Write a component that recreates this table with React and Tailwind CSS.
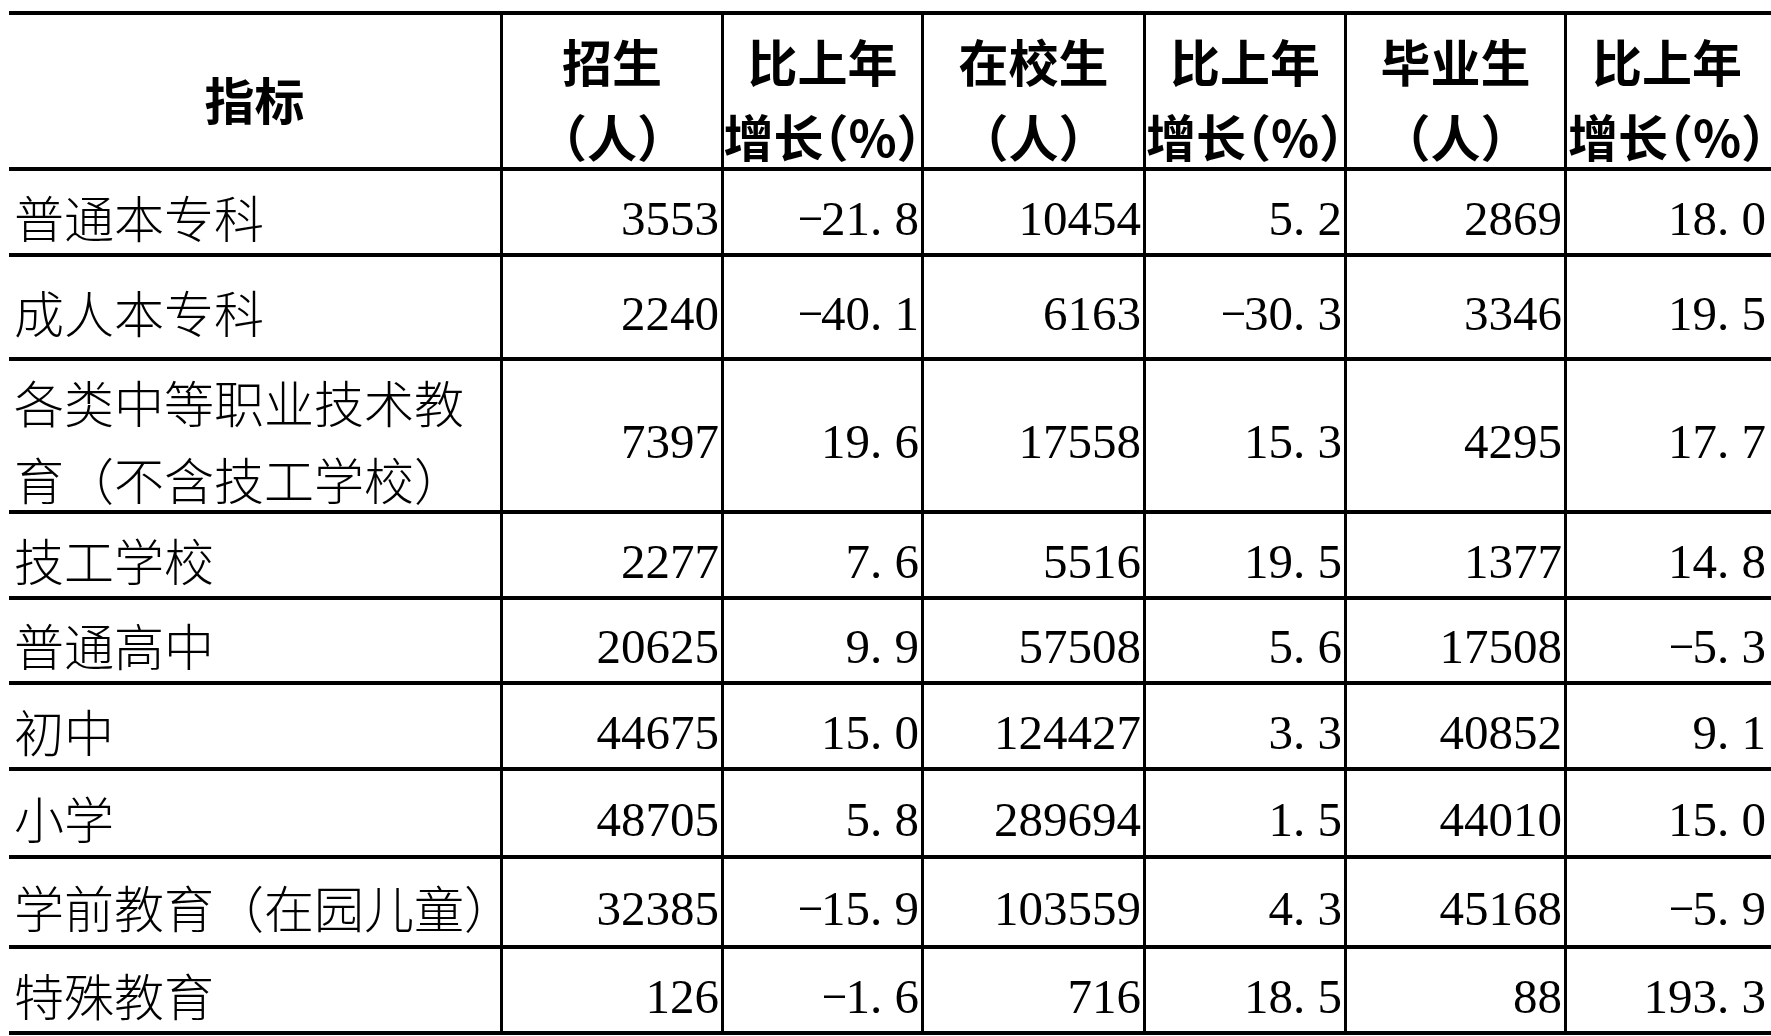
import React from 'react';

const header = [
  ['招生', '（人）'],
  ['比上年', '增长（%）'],
  ['在校生', '（人）'],
  ['比上年', '增长（%）'],
  ['毕业生', '（人）'],
  ['比上年', '增长（%）'],
];

const rows = [
  { name: ['普通本专科'], v: ['3553', '-21.8', '10454', '5.2', '2869', '18.0'] },
  { name: ['成人本专科'], v: ['2240', '-40.1', '6163', '-30.3', '3346', '19.5'] },
  { name: ['各类中等职业技术教', '育（不含技工学校）'], v: ['7397', '19.6', '17558', '15.3', '4295', '17.7'] },
  { name: ['技工学校'], v: ['2277', '7.6', '5516', '19.5', '1377', '14.8'] },
  { name: ['普通高中'], v: ['20625', '9.9', '57508', '5.6', '17508', '-5.3'] },
  { name: ['初中'], v: ['44675', '15.0', '124427', '3.3', '40852', '9.1'] },
  { name: ['小学'], v: ['48705', '5.8', '289694', '1.5', '44010', '15.0'] },
  { name: ['学前教育（在园儿童）'], v: ['32385', '-15.9', '103559', '4.3', '45168', '-5.9'] },
  { name: ['特殊教育'], v: ['126', '-1.6', '716', '18.5', '88', '193.3'] },
];

// half-width cells like the Song face: period sits left, dash runs most of the cell
const Num = ({ v }) => (
  <span className="whitespace-nowrap">
    {[...v].map((c, i) => {
      if (c === '.') return <span key={i} className="inline-block w-[0.5em] text-left">.</span>;
      if (c === '-')
        return (
          <span key={i} className="inline-block w-[0.5em] text-left">
            <span className="inline-block origin-left scale-x-[1.65] scale-y-[0.7] -translate-y-[3px]">-</span>
          </span>
        );
      return c;
    })}
  </span>
);

// header line with the brackets of (%) set half width
const HeadLine = ({ text }) => {
  if (!text.includes('%')) return <span>{text}</span>;
  return (
    <span className="whitespace-nowrap">
      增长<span className="[font-feature-settings:'halt']">（</span>%<span className="[font-feature-settings:'halt']">）</span>
    </span>
  );
};

export default function App() {
  const cjk = "font-['Noto_Sans_CJK_SC',sans-serif]";
  const num = "font-['Liberation_Serif',serif]";

  return (
    <div className="w-[1771px] h-[1036px] overflow-hidden bg-white text-black">
      <div className="ml-[9px] mt-[11px] w-max grid grid-cols-[491px_221px_200px_222px_201px_220px_207px] grid-rows-[160px_86px_104px_153px_86px_85px_86px_88px_90px_86px]">
        {/* header */}
        <div className={`${cjk} font-bold text-[50px] leading-[75px] border-t-[4px] border-b-[4px] border-black flex items-center justify-center pt-[14px]`}>
          指标
        </div>
        {header.map((h, i) => (
          <div
            key={i}
            className={`${cjk} font-bold text-[50px] leading-[75px] border-t-[4px] border-b-[4px] border-l-[3px] border-black flex flex-col items-center justify-center pt-[14px] ${i === 5 ? 'pr-[4px]' : ''}`}
          >
            <HeadLine text={h[0]} />
            <HeadLine text={h[1]} />
          </div>
        ))}

        {/* body */}
        {rows.map((r, ri) => (
          <React.Fragment key={ri}>
            <div className={`${cjk} font-light text-[50px] leading-[77px] border-b-[4px] border-black flex flex-col items-start justify-center pl-[5px] pt-[8px] whitespace-nowrap`}>
              {r.name.map((n, ni) => (
                <span key={ni}>{n}</span>
              ))}
            </div>
            {r.v.map((v, vi) => (
              <div
                key={vi}
                className={`${num} text-[49px] leading-[60px] border-b-[4px] border-l-[3px] border-black flex items-center justify-end pt-[13px] ${vi === 5 ? 'pr-[5px]' : 'pr-[2px]'}`}
              >
                <Num v={v} />
              </div>
            ))}
          </React.Fragment>
        ))}
      </div>
    </div>
  );
}
